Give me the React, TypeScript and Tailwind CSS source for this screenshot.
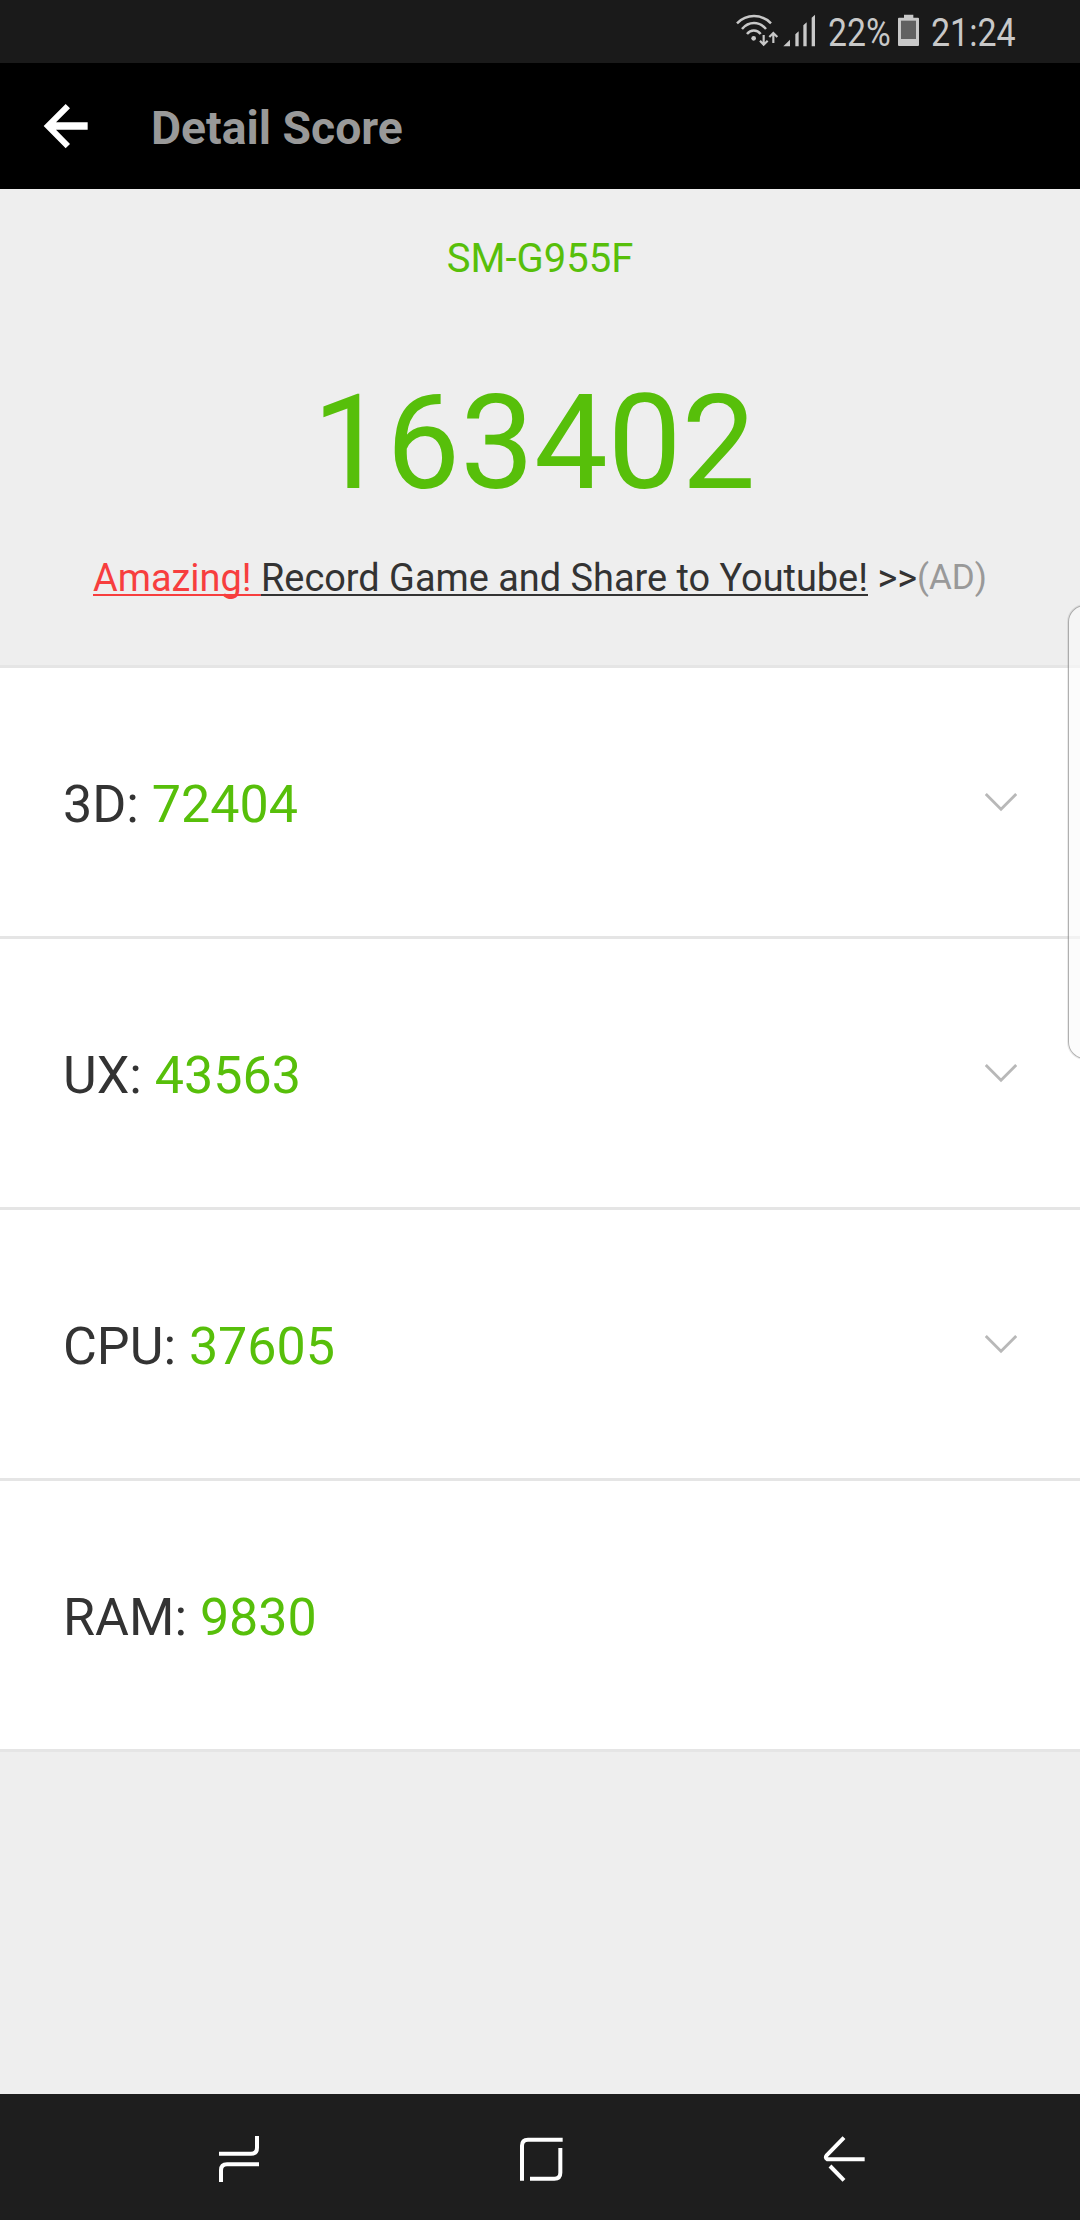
type Score = { label: string; value: string; expandable: boolean };

const scores: Score[] = [
  { label: "3D", value: "72404", expandable: true },
  { label: "UX", value: "43563", expandable: true },
  { label: "CPU", value: "37605", expandable: true },
  { label: "RAM", value: "9830", expandable: false },
];

function NetworkIcons() {
  return (
    <svg className="block h-[63px] w-[107px] shrink-0" viewBox="0 0 321 189" fill="none" stroke="#c8c8c8">
      <g strokeWidth="7.5">
        <path d="M51 70C80 41 124 41 153 70" />
        <path d="M66 87C86 63 118 63 138 87" />
        <path d="M81 102C92 88 111 88 122 102" />
        <path d="M131 105V132M120 122L131 134L143 122" strokeWidth="6.5" />
        <path d="M160 129V101M148 111L160 99L172 111" strokeWidth="6.5" />
      </g>
      <g fill="#c8c8c8" stroke="none">
        <circle cx="101" cy="115" r="7" />
        <path d="M190 139L210 119V139Z" />
        <path d="M226 139V103L236 94V139Z" />
        <path d="M250 139V76L260 67V139Z" />
        <path d="M275 139V53L285 44V139Z" />
      </g>
    </svg>
  );
}

function StatusBar() {
  return (
    <div className="flex h-[63px] items-center bg-[#1a1a1a] pl-[720px] text-[39px] leading-[46px] text-[#c8c8c8]">
      <NetworkIcons />
      <div className="w-[71px] shrink-0 pt-[3px] pl-[0.5px]">
        <span className="block origin-left scale-x-[0.865] whitespace-nowrap">22%</span>
      </div>
      <svg className="block h-[63px] w-[21px] shrink-0" viewBox="0 0 63 189">
        <path d="M18 44H46V53H60Q63 53 63 56V135Q63 138 60 138H3Q0 138 0 135V56Q0 53 3 53H18Z" fill="#c8c8c8" />
        <path d="M9 62H54V117H9Z" fill="#616161" />
      </svg>
      <div className="ml-[12px] w-[90px] shrink-0 pt-[3px]">
        <span className="block origin-left scale-x-[0.871] whitespace-nowrap">21:24</span>
      </div>
    </div>
  );
}

function Header() {
  return (
    <header className="flex h-[126px] items-center bg-black pl-[43px]">
      <svg className="block h-[46px] w-[46px]" viewBox="129 157 138 138" fill="#fff">
        <path d="M131 226L197 160L210 173L168 215H263V237H168L210 280L197 293Z" />
      </svg>
      <h1 className="ml-[62px] pt-1 text-[46.3px] leading-[54px] font-bold text-[#999]">Detail Score</h1>
    </header>
  );
}

function Summary() {
  return (
    <section className="h-[479px] border-b-[3px] border-[#e5e5e5] pt-[46px] text-center whitespace-nowrap text-[#57bf0a]">
      <div className="text-[40px] leading-[47px]">SM-G955F</div>
      <div className="mt-[84px] pr-3 text-[131.4px] leading-[154px]">163402</div>
      <p className="mt-9 h-11 text-[37.9px] leading-[44px] text-[#333]">
        <span className="text-[#f73e3e] underline decoration-2 underline-offset-[3px] [text-decoration-skip-ink:none]">
          {"Amazing! "}
        </span>
        <span className="underline decoration-2 underline-offset-[3px] [text-decoration-skip-ink:none]">
          Record Game and Share to Youtube!
        </span>
        {" >>"}
        <span className="align-[2px] text-[35px] leading-none text-[#999]">(AD)</span>
      </p>
    </section>
  );
}

function ScoreRow({ label, value, expandable }: Score) {
  return (
    <li className="flex h-[271px] items-center justify-between border-b-[3px] border-[#e5e5e5] bg-white px-[63px]">
      <span className="pt-[5px] text-[52px] leading-[61px] text-[#333]">
        {label}: <span className="text-[#57bf0a]">{value}</span>
      </span>
      {expandable && (
        <svg className="block h-[20px] w-[32px]" viewBox="0 0 32 20" fill="none" stroke="#b8b8b8" strokeWidth="2.8">
          <path d="M0.8 2L16 17.2L31.2 2" />
        </svg>
      )}
    </li>
  );
}

function NavBar() {
  return (
    <nav className="flex h-[126px] gap-[190px] bg-[#1e1e1e] pl-[190px]">
      <svg className="block h-[106px] w-[110px]" viewBox="0 42 330 318" fill="none" stroke="#fff" strokeWidth="12">
        <path d="M87 221H183Q201 221 201 203V168" />
        <path d="M207 253H111Q93 253 93 271V306" />
      </svg>
      <svg className="block h-[106px] w-[110px]" viewBox="0 42 330 318" fill="none" stroke="#fff" strokeWidth="12">
        <path d="M218 179H114Q96 179 96 197V302" />
        <path d="M211 204V278Q211 296 193 296H120" />
      </svg>
      <svg className="block h-[106px] w-[110px]" viewBox="0 42 330 318" fill="none" stroke="#fff" strokeWidth="12">
        <path d="M162 173L110 226Q104 233 112 238H224" />
        <path d="M120 258L162 301" />
      </svg>
    </nav>
  );
}

export default function App() {
  return (
    <div className="relative flex h-[2220px] w-[1080px] flex-col overflow-hidden bg-[#eee] font-[Roboto,sans-serif]">
      <StatusBar />
      <Header />
      <Summary />
      <ul>
        {scores.map((s) => (
          <ScoreRow key={s.label} {...s} />
        ))}
      </ul>
      <div className="flex-1" />
      <NavBar />
      {/* Edge panel handle, clipped by the screen's right side */}
      <div className="absolute top-[605px] -right-6 h-[454px] w-9 rounded-[17px] border border-black/30 bg-[#fafafa]/60 shadow-[0_0_0_1px_rgba(0,0,0,0.08)]" />
    </div>
  );
}
